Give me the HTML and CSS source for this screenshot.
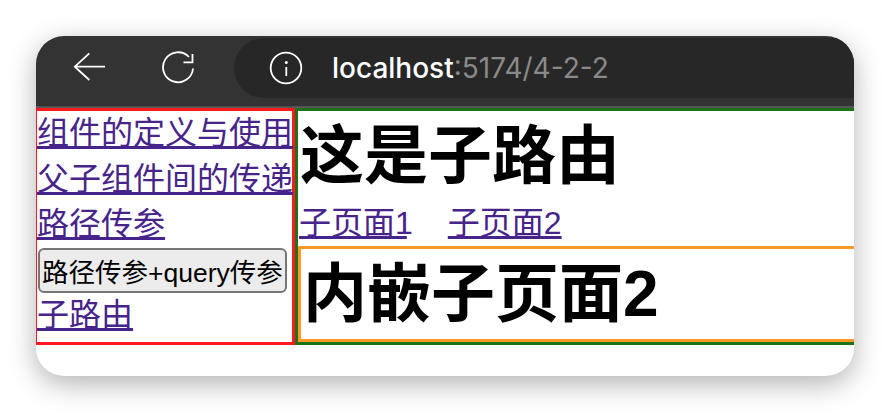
FILE: index.html
```html
<!DOCTYPE html>
<html lang="en">
<head>
    <meta charset="UTF-8">
    <title>localhost:5174/4-2-2</title>
    <link rel="stylesheet" href="styles.css">
</head>
<body>

    <div class="window">
        <div class="toolbar">
            <svg class="icon back" width="34" height="34" viewBox="0 0 34 34">
                <path d="M32 16.700H2M16.300 3.300L1.800 16.700L16.300 30" fill="none" stroke="#fff" stroke-width="1.800"/>
            </svg>
            <svg class="icon reload" width="34" height="34" viewBox="0 0 34 34">
                <path d="M28 6A15 15 0 1 0 32 17.500" fill="none" stroke="#fff" stroke-width="1.800"/>
                <path d="M22.500 11.300H31.500V3" fill="none" stroke="#fff" stroke-width="1.800"/>
            </svg>
            <div class="address">
                <svg class="icon info" width="34" height="34" viewBox="0 0 34 34">
                    <circle cx="17" cy="17" r="15.300" fill="none" stroke="#fff" stroke-width="1.800"/>
                    <circle cx="17.300" cy="11.500" r="1.500" fill="#fff"/>
                    <path d="M17.300 16V25" fill="none" stroke="#fff" stroke-width="1.800"/>
                </svg>
                <span class="host">localhost</span><span class="path">:5174/4-2-2</span>
            </div>
        </div>

        <div class="page">
            <div class="nav">
                <a href="#">组件的定义与使用</a>
                <a href="#">父子组件间的传递</a>
                <a href="#">路径传参</a>
                <button type="button">路径传参+query传参</button>
                <a href="#">子路由</a>
            </div>
            <div class="content">
                <h1>这是子路由</h1>
                <div class="tabs">
                    <a href="#">子页面<span class="digit">1</span></a>
                    <a href="#">子页面2</a>
                </div>
                <div class="inner">
                    <h1>内嵌子页面2</h1>
                </div>
            </div>
        </div>
    </div>

</body>
</html>
```

FILE: styles.css
```css
* {
    box-sizing: border-box;
    font-family: "Liberation Sans", "Noto Sans CJK SC", sans-serif;
}
body {
    margin: 0;
    width: 890px;
    height: 412px;
    padding: 36px;
    background: #fff;
    overflow: hidden;
}
.window {
    width: 818px;
    height: 340px;
    background: #fff;
    border-radius: 28px;
    overflow: hidden;
    box-shadow: 0 8px 28px rgba(0, 0, 0, 0.3);
}
.toolbar {
    display: flex;
    align-items: flex-start;
    height: 72px;
    padding-top: 2px;
    background: #333;
    border-bottom: 2px solid #555;
}
.icon {
    display: block;
    flex-shrink: 0;
}
.back {
    margin: 12px 0 0 37px;
}
.reload {
    margin: 13px 0 0 54px;
}
.address {
    display: flex;
    align-items: center;
    flex: 1;
    height: 60px;
    margin-left: 39px;
    padding-left: 35px;
    background: #272727;
    border-radius: 30px 0 0 30px;
    font-size: 28px;
}
.info {
    margin-right: 29px;
}
.address span {
    font-family: Inter, sans-serif;
}
.host {
    color: #fff;
    font-weight: 500;
}
.path {
    color: #8a8a8a;
}
/* left border and right side run past the window and get clipped */
.page {
    display: flex;
    height: 237px;
    margin: 0 -20px 0 -2px;
}
.nav {
    display: flex;
    flex-direction: column;
    align-items: flex-start;
    width: 261px;
    flex-shrink: 0;
    border: 3px solid #ff1a22;
}
a {
    color: #47248a;
    font-size: 32px;
    line-height: 45.500px;
    text-decoration-thickness: 3px;
}
.nav a {
    display: block;
    white-space: nowrap;
}
.digit {
    letter-spacing: -6px;
}
button {
    height: 45px;
    width: 249px;
    margin: 0 0 0 1px;
    padding: 0;
    border: 2px solid #767676;
    border-radius: 6px;
    background: #ececec;
    color: #000;
    font-size: 26.500px;
    white-space: nowrap;
}
.content {
    flex: 1;
    min-width: 0;
    border: 3px solid #1a7316;
}
h1 {
    margin: 0;
    font-size: 64px;
    line-height: 90px;
    font-weight: bold;
    color: #000;
}
.content > h1 {
    padding-left: 2px;
}
.tabs {
    display: flex;
    gap: 41px;
    height: 45px;
    padding-left: 1px;
}
.inner {
    height: 96px;
    padding-left: 2px;
    border: 3px solid #f99a27;
    border-right: none;
}
```
